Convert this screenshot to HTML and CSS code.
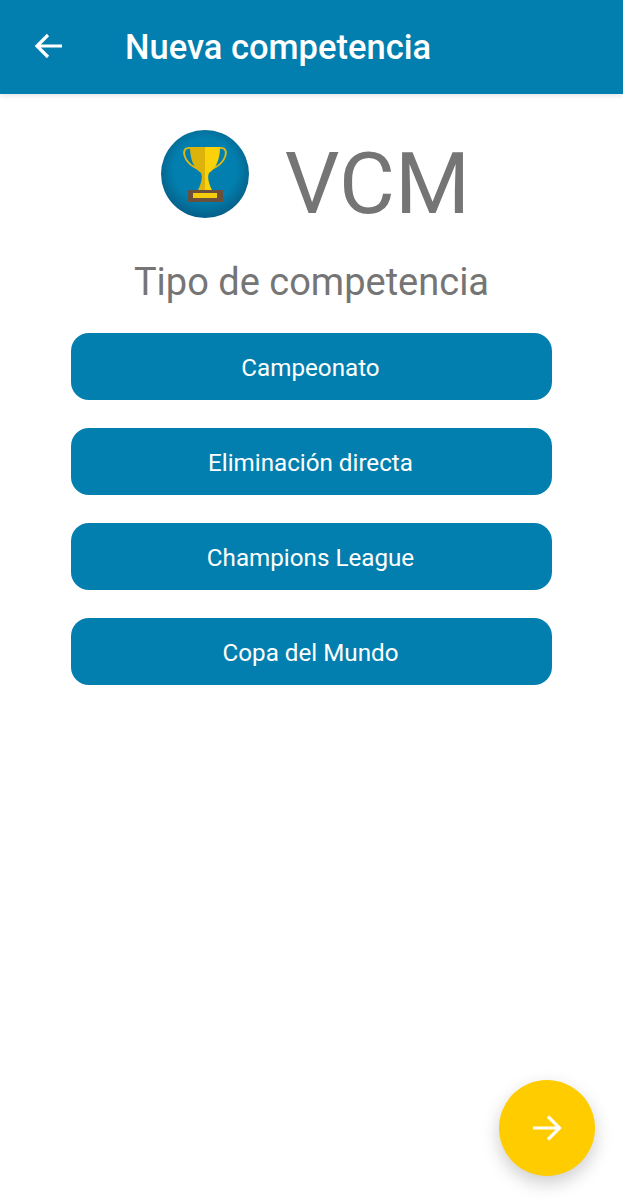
FILE: index.html
```html
<!DOCTYPE html>
<html>
<head>
    <meta charset="utf-8">
    <title>Nueva competencia</title>
    <link rel="stylesheet" href="styles.css">
</head>
<body>
<div class="app-bar">
    <svg class="back-icon" width="32" height="32" viewBox="0 0 32 32">
        <path d="M30 16H5M16 5L5 16L16 27" fill="none" stroke="#fff" stroke-width="3.200"/>
    </svg>
    <h1>Nueva competencia</h1>
</div>
<div class="brand">
    <svg class="logo" width="88" height="88" viewBox="0 0 88 88">
        <defs>
            <radialGradient id="disc" cx="50%" cy="45%" r="55%">
                <stop offset="0.65" stop-color="#027fae"/>
                <stop offset="1" stop-color="#055f88"/>
            </radialGradient>
        </defs>
        <circle cx="44" cy="44" r="44" fill="url(#disc)"/>
        <path d="M30 18C23 17 22 22 24 27C26 33 32 37 39 40M58 18C65 17 66 22 64 27C62 33 56 37 49 40" fill="none" stroke="#e0b90f" stroke-width="1.800"/>
        <path d="M29 17H44V60H37C40 54 42 47 40 43C33 38 29 30 29 17Z" fill="#dcb30a"/>
        <path d="M44 17H59C59 30 55 38 48 43C46 47 48 54 51 60H44Z" fill="#fbd109"/>
        <rect x="27" y="60" width="35" height="12" fill="#6a4f3c"/>
        <rect x="32" y="63" width="24" height="5" fill="#f5cb0c"/>
    </svg>
    <span class="brand-name">VCM</span>
</div>
<h2 class="section-title">Tipo de competencia</h2>
<div class="type-list">
    <button class="type-btn">Campeonato</button>
    <button class="type-btn">Eliminación directa</button>
    <button class="type-btn">Champions League</button>
    <button class="type-btn">Copa del Mundo</button>
</div>
<button class="fab">
    <svg width="32" height="32" viewBox="0 0 32 32">
        <path d="M2 16H28M17 4.500L28.500 16L17 27.500" fill="none" stroke="#fff" stroke-width="3.200"/>
    </svg>
</button>
</body>
</html>
```

FILE: styles.css
```css
html, body {
    margin: 0;
    height: 1200px;
    overflow: hidden;
}
body {
    position: relative;
    background: #ffffff;
    font-family: Roboto, sans-serif;
}
.app-bar {
    height: 94px;
    background: #027fae;
    display: flex;
    align-items: center;
    padding-left: 32px;
    box-shadow: 0 2px 5px rgba(0, 0, 0, 0.1);
}
.back-icon {
    margin-top: -3px;
}
.app-bar h1 {
    margin: 0 0 0 61px;
    color: #ffffff;
    font-size: 34.500px;
    font-weight: 500;
}
.brand {
    display: flex;
    justify-content: center;
    align-items: center;
    gap: 36px;
    margin: 36px 0 0 8px;
    height: 88px;
}
.brand-name {
    font-size: 86px;
    color: #757575;
    line-height: 88px;
    margin-top: 19px;
}
.section-title {
    margin: 39px 0 0;
    text-align: center;
    color: #757575;
    font-size: 38px;
    font-weight: 400;
    line-height: 50px;
}
.type-list {
    display: flex;
    flex-direction: column;
    gap: 28px;
    margin: 26px 71px 0;
}
.type-btn {
    height: 67px;
    padding: 2px 8px 0 6px;
    border: 0;
    border-radius: 18px;
    background: #027fae;
    color: #ffffff;
    font-family: Roboto, sans-serif;
    font-size: 24.200px;
}
.fab {
    position: absolute;
    left: 499px;
    top: 1080px;
    width: 96px;
    height: 96px;
    padding: 0;
    border: 0;
    border-radius: 50%;
    background: #ffcc00;
    display: flex;
    align-items: center;
    justify-content: center;
    box-shadow: 0 7px 18px rgba(0, 0, 0, 0.2);
}
```
